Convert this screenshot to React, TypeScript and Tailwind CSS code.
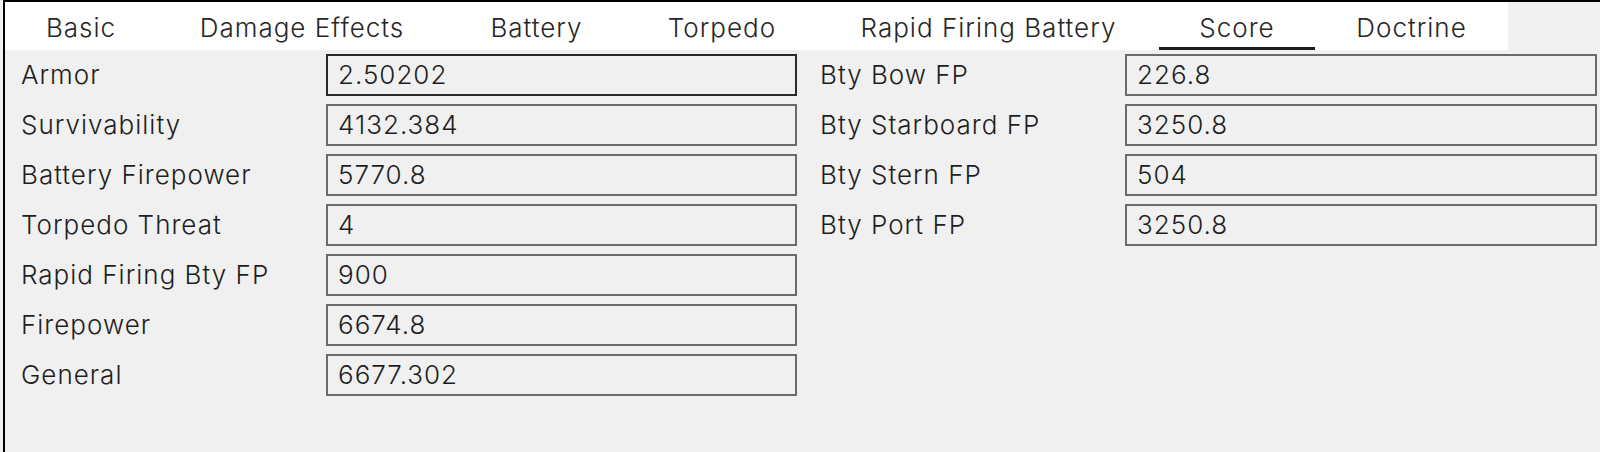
import { useState } from "react";

const tabs = [
  { name: "Basic", w: "w-[152px]" },
  { name: "Damage Effects", w: "w-[290px]" },
  { name: "Battery", w: "w-[179px]" },
  { name: "Torpedo", w: "w-[192px]" },
  { name: "Rapid Firing Battery", w: "w-[341px]" },
  { name: "Score", w: "w-[156px]" },
  { name: "Doctrine", w: "w-[193px]" },
];

const leftFields = [
  { label: "Armor", value: "2.50202" },
  { label: "Survivability", value: "4132.384" },
  { label: "Battery Firepower", value: "5770.8" },
  { label: "Torpedo Threat", value: "4" },
  { label: "Rapid Firing Bty FP", value: "900" },
  { label: "Firepower", value: "6674.8" },
  { label: "General", value: "6677.302" },
];

const rightFields = [
  { label: "Bty Bow FP", value: "226.8" },
  { label: "Bty Starboard FP", value: "3250.8" },
  { label: "Bty Stern FP", value: "504" },
  { label: "Bty Port FP", value: "3250.8" },
];

const Field = ({
  label,
  value,
  focused,
  inputWidth,
}: {
  label: string;
  value: string;
  focused?: boolean;
  inputWidth: string;
}) => (
  <div className="flex items-center h-[42px]">
    <span className="w-[305px] shrink-0 text-[#1e1e1e]">{label}</span>
    <div
      className={`${inputWidth} h-[42px] border-2 flex items-center pl-[10px] text-[#1e1e1e] ${
        focused ? "border-[#2a2a2a]" : "border-[#6b6b6b]"
      }`}
    >
      {value}
    </div>
  </div>
);

const App = () => {
  const [active, setActive] = useState("Score");

  return (
    <div
      className="w-[1600px] h-[452px] bg-[#f0f0f0] pl-[3px] overflow-hidden text-[26px] leading-none font-light tracking-[1px]"
      style={{ fontFamily: "Inter, 'Noto Sans', sans-serif" }}
    >
      <div className="h-full border-l-2 border-t-2 border-black flex flex-col">
        {/* tab bar */}
        <div className="flex">
          <div className="flex bg-white h-[48px]">
            {tabs.map((t) => (
              <button
                key={t.name}
                onClick={() => setActive(t.name)}
                className={`${t.w} h-full relative flex items-center justify-center text-[#262626] pt-[4px] font-light tracking-[1px]`}
              >
                {t.name}
                {active === t.name && (
                  <span className="absolute left-0 right-0 bottom-0 h-[3px] bg-[#1c1c1c]" />
                )}
              </button>
            ))}
          </div>
        </div>

        {/* score fields */}
        <div className="flex gap-[23px] pl-[16px] pt-[4px]">
          <div className="flex flex-col gap-2">
            {leftFields.map((f, i) => (
              <Field key={f.label} {...f} focused={i === 0} inputWidth="w-[471px]" />
            ))}
          </div>
          <div className="flex flex-col gap-2">
            {rightFields.map((f) => (
              <Field key={f.label} {...f} inputWidth="w-[472px]" />
            ))}
          </div>
        </div>
      </div>
    </div>
  );
};

export default App;
